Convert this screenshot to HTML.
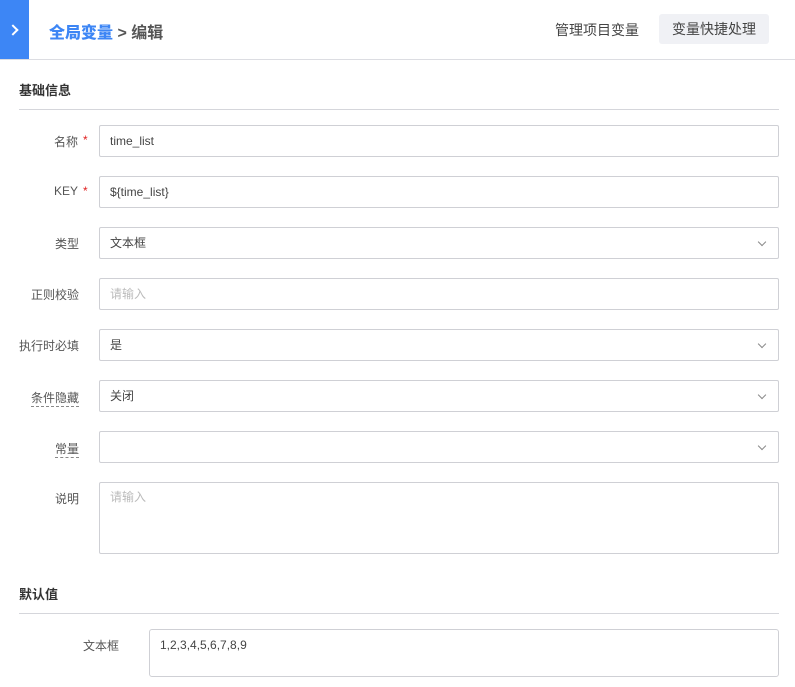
<!DOCTYPE html>
<html><head><meta charset="utf-8"><style>
*{box-sizing:border-box;margin:0;padding:0}
body{width:795px;height:687px;overflow:hidden;background:#fff;font-family:"Liberation Sans","Noto Sans CJK SC",sans-serif;font-size:12px;color:#333}
.hd{position:absolute;left:0;top:0;width:795px;height:60px;border-bottom:1px solid #dcdde2}
.blk{position:absolute;left:0;top:0;width:29px;height:59px;background:#3d86f5}
.blk:after{content:"";position:absolute;left:9px;top:26px;width:6px;height:6px;border-right:2px solid #fff;border-top:2px solid #fff;transform:rotate(45deg)}
.bc{position:absolute;left:49px;top:19px;font-size:16px;font-weight:bold;color:#555}
.bc b{color:#3d86f5}
.mg{position:absolute;left:555px;top:20px;font-size:14px;color:#444}
.btn{position:absolute;left:659px;top:14px;width:110px;height:30px;background:#f0f1f5;border-radius:3px;font-size:14px;color:#444;text-align:center;line-height:30px}
.sec{position:absolute;left:19px;width:760px;border-bottom:1px solid #d5d6db;font-size:13px;font-weight:bold;color:#333}
.lb{position:absolute;width:80px;text-align:right;font-size:12px;color:#555;padding-right:1px}
.lb i{color:#e02020;font-style:normal;position:absolute;left:83px}
.dash{border-bottom:1px dashed #888;padding-bottom:1px}
.in{position:absolute;left:99px;width:680px;height:32px;border:1px solid #cfd0d5;border-radius:2px;padding-left:10px;line-height:30px;font-size:12px;color:#444}
.ph{color:#bbb}
.ar{position:absolute;right:13px;top:11px;width:6px;height:6px;border-right:1px solid #888;border-bottom:1px solid #888;transform:rotate(45deg)}
</style></head><body>
<div class="hd"><div class="blk"></div>
<div class="bc"><b>全局变量</b> &gt; 编辑</div>
<div class="mg">管理项目变量</div><div class="btn">变量快捷处理</div></div>
<div class="sec" style="top:80px;height:30px">基础信息</div>

<div class="lb" style="left:0;top:133px;width:79px">名称<i>*</i></div>
<div class="in" style="top:125px">time_list</div>
<div class="lb" style="left:0;top:184px;width:79px">KEY<i>*</i></div>
<div class="in" style="top:176px">${time_list}</div>
<div class="lb" style="left:0;top:235px">类型</div>
<div class="in" style="top:227px">文本框<span class="ar"></span></div>
<div class="lb" style="left:0;top:286px">正则校验</div>
<div class="in ph" style="top:278px">请输入</div>
<div class="lb" style="left:0;top:337px">执行时必填</div>
<div class="in" style="top:329px">是<span class="ar"></span></div>
<div class="lb" style="left:0;top:389px"><span class="dash">条件隐藏</span></div>
<div class="in" style="top:380px">关闭<span class="ar"></span></div>
<div class="lb" style="left:0;top:440px"><span class="dash">常量</span></div>
<div class="in" style="top:431px"><span class="ar"></span></div>
<div class="lb" style="left:0;top:490px">说明</div>
<div class="in ph" style="top:482px;height:72px;line-height:28px">请输入</div>

<div class="sec" style="top:584px;height:30px">默认值</div>
<div class="lb" style="left:40px;top:637px">文本框</div>
<div class="in" style="left:149px;width:630px;top:629px;height:48px;line-height:30px;border-radius:3px">1,2,3,4,5,6,7,8,9</div>
</body></html>
